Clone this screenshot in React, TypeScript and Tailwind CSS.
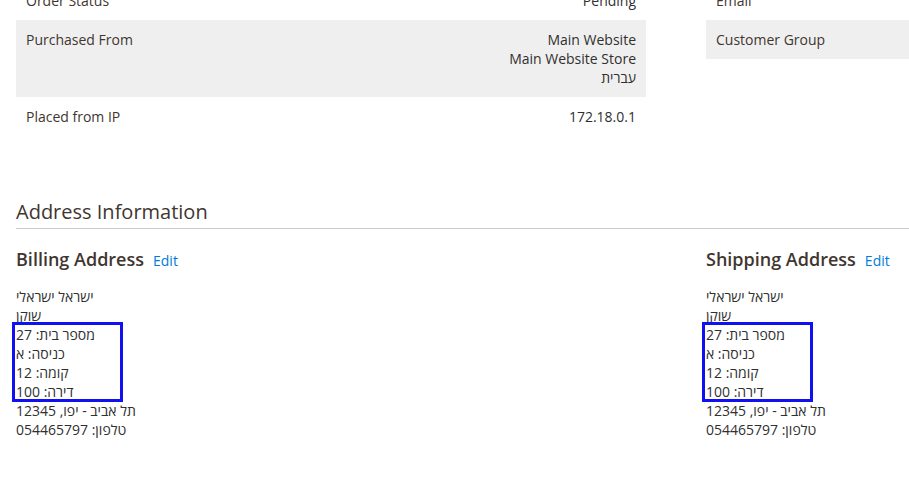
import React from 'react';

const sans = "font-['Open_Sans','Liberation_Sans',sans-serif]";

interface Row {
    label: string;
    value: string[];
    shaded?: boolean;
}

const orderRows: Row[] = [
    { label: 'Order Status', value: ['Pending'] },
    { label: 'Purchased From', value: ['Main Website', 'Main Website Store', 'עברית'], shaded: true },
    { label: 'Placed from IP', value: ['172.18.0.1'] },
];

const accountRows: Row[] = [
    { label: 'Email', value: [] },
    { label: 'Customer Group', value: [], shaded: true },
];

const InfoTable: React.FC<{ rows: Row[] }> = ({ rows }) => (
    <div className="w-[630px] flex flex-col">
        {rows.map((r) => (
            <div
                key={r.label}
                className={`flex justify-between px-[10px] py-[10px] text-[14px] leading-[19px] ${r.shaded ? 'bg-[#efefef]' : ''}`}
            >
                <span className="text-[#41362f]">{r.label}</span>
                <div className="flex flex-col items-end text-[#303030]">
                    {r.value.map((v) => (
                        <span key={v}>{v}</span>
                    ))}
                </div>
            </div>
        ))}
    </div>
);

const AddressBlock: React.FC<{ title: string }> = ({ title }) => (
    <div className="w-[630px]">
        <div className="flex items-baseline gap-[9px]">
            <h3 className="text-[18px] leading-[24px] -mt-[1px] font-semibold text-[#41362f]">{title}</h3>
            <a className="text-[14px] text-[#007bdb]">Edit</a>
        </div>
        <div className="mt-[16px] text-[14px] leading-[19px] text-[#303030] font-['Open_Sans','Liberation_Sans',sans-serif]">
            <div>ישראל ישראלי</div>
            <div>שוקן</div>
            <div className="relative">
                <div>מספר בית: 27</div>
                <div>כניסה: א</div>
                <div>קומה: 12</div>
                <div>דירה: 100</div>
                <span className="absolute -left-[4px] -top-[3px] w-[111px] h-[80px] border-[3px] border-[#1010f0] pointer-events-none" />
            </div>
            <div>תל אביב - יפו, 12345</div>
            <div>טלפון: 054465797</div>
        </div>
    </div>
);

export default function App() {
    return (
        <div className={`w-[909px] h-[500px] overflow-hidden bg-white ${sans}`}>
            <div className="w-[1336px] pl-[16px] -mt-[19px]">
                <div className="flex gap-[60px]">
                    <InfoTable rows={orderRows} />
                    <InfoTable rows={accountRows} />
                </div>

                <div className="mt-[64px] pb-[4px] border-b border-[#cccccc]">
                    <h2 className="text-[20px] leading-[24px] text-[#41362f]">Address Information</h2>
                </div>

                <div className="mt-[19px] flex gap-[60px]">
                    <AddressBlock title="Billing Address" />
                    <AddressBlock title="Shipping Address" />
                </div>
            </div>
        </div>
    );
}
